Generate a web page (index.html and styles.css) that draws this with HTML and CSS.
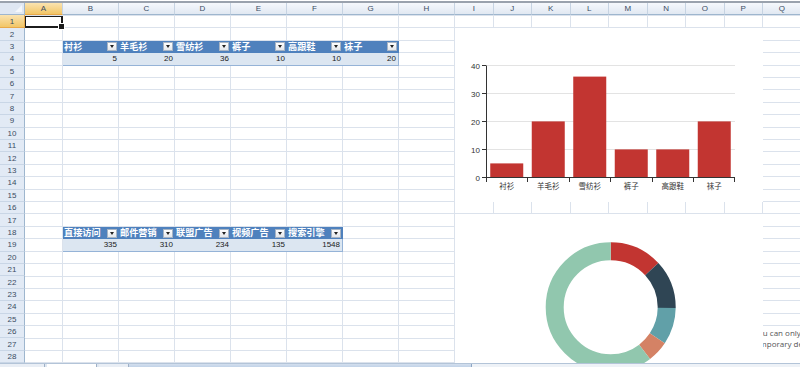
FILE: index.html
```html
<!DOCTYPE html>
<html lang="zh-CN">
  <head>
    <meta charset="UTF-8" />
    <title>Sheet1</title>
    <link rel="stylesheet" href="styles.css">
  </head>
  <body>
    <div class="book">
      <div class="topline"></div>

      <div class="sheet">
        <!-- column headers -->
        <div class="corner"><span class="tri"></span></div>
        <div class="ch sel">A</div>
        <div class="ch">B</div>
        <div class="ch">C</div>
        <div class="ch">D</div>
        <div class="ch">E</div>
        <div class="ch">F</div>
        <div class="ch">G</div>
        <div class="ch">H</div>
        <div class="ch">I</div>
        <div class="ch">J</div>
        <div class="ch">K</div>
        <div class="ch">L</div>
        <div class="ch">M</div>
        <div class="ch">N</div>
        <div class="ch">O</div>
        <div class="ch">P</div>
        <div class="ch">Q</div>

        <!-- row headers -->
        <div class="rh sel">1</div>
        <div class="rh">2</div>
        <div class="rh">3</div>
        <div class="rh">4</div>
        <div class="rh">5</div>
        <div class="rh">6</div>
        <div class="rh">7</div>
        <div class="rh">8</div>
        <div class="rh">9</div>
        <div class="rh">10</div>
        <div class="rh">11</div>
        <div class="rh">12</div>
        <div class="rh">13</div>
        <div class="rh">14</div>
        <div class="rh">15</div>
        <div class="rh">16</div>
        <div class="rh">17</div>
        <div class="rh">18</div>
        <div class="rh">19</div>
        <div class="rh">20</div>
        <div class="rh">21</div>
        <div class="rh">22</div>
        <div class="rh">23</div>
        <div class="rh">24</div>
        <div class="rh">25</div>
        <div class="rh">26</div>
        <div class="rh">27</div>
        <div class="rh">28</div>

        <!-- empty cell grid -->
        <div class="cells">
          <div></div><div></div><div></div><div></div><div></div><div></div>
          <div></div><div></div><div></div><div></div><div></div><div></div>
          <div></div><div></div><div></div><div></div><div></div>
        </div>

        <div class="active-cell"></div>

        <!-- table 1 -->
        <div class="tbl t1">
          <div class="th">衬衫<span class="dd"></span></div>
          <div class="th">羊毛衫<span class="dd"></span></div>
          <div class="th">雪纺衫<span class="dd"></span></div>
          <div class="th">裤子<span class="dd"></span></div>
          <div class="th">高跟鞋<span class="dd"></span></div>
          <div class="th">袜子<span class="dd"></span></div>
          <div class="td">5</div>
          <div class="td">20</div>
          <div class="td">36</div>
          <div class="td">10</div>
          <div class="td">10</div>
          <div class="td">20</div>
        </div>

        <!-- table 2 -->
        <div class="tbl t2">
          <div class="th">直接访问<span class="dd"></span></div>
          <div class="th">邮件营销<span class="dd"></span></div>
          <div class="th">联盟广告<span class="dd"></span></div>
          <div class="th">视频广告<span class="dd"></span></div>
          <div class="th">搜索引擎<span class="dd"></span></div>
          <div class="td">335</div>
          <div class="td">310</div>
          <div class="td">234</div>
          <div class="td">135</div>
          <div class="td">1548</div>
        </div>

        <!-- note partly hidden behind the charts -->
        <div class="note">
          <p class="l1">you can only view</p>
          <p class="l2">temporary demo</p>
        </div>

        <!-- bar chart -->
        <div class="chart chart1">
          <svg width="308" height="174" viewBox="0 0 308 174">
            <g class="grid-lines">
              <line x1="31" y1="37.5" x2="280" y2="37.5" />
              <line x1="31" y1="65.5" x2="280" y2="65.5" />
              <line x1="31" y1="93.5" x2="280" y2="93.5" />
              <line x1="31" y1="121.5" x2="280" y2="121.5" />
            </g>
            <g fill="#c23531">
              <rect x="35.25" y="135.4" width="33" height="14" />
              <rect x="76.75" y="93.4" width="33" height="56" />
              <rect x="118.25" y="48.6" width="33" height="100.8" />
              <rect x="159.75" y="121.4" width="33" height="28" />
              <rect x="201.25" y="121.4" width="33" height="28" />
              <rect x="242.75" y="93.4" width="33" height="56" />
            </g>
            <g class="axis">
              <line x1="31.5" y1="37.5" x2="31.5" y2="149.5" />
              <line x1="31" y1="149.5" x2="280" y2="149.5" />
              <line x1="27" y1="37.5" x2="31" y2="37.5" />
              <line x1="27" y1="65.5" x2="31" y2="65.5" />
              <line x1="27" y1="93.5" x2="31" y2="93.5" />
              <line x1="27" y1="121.5" x2="31" y2="121.5" />
              <line x1="27" y1="149.5" x2="31" y2="149.5" />
              <line x1="31.5" y1="149.5" x2="31.5" y2="154" />
              <line x1="72.5" y1="149.5" x2="72.5" y2="154" />
              <line x1="114.5" y1="149.5" x2="114.5" y2="154" />
              <line x1="155.5" y1="149.5" x2="155.5" y2="154" />
              <line x1="197.5" y1="149.5" x2="197.5" y2="154" />
              <line x1="238.5" y1="149.5" x2="238.5" y2="154" />
              <line x1="279.5" y1="149.5" x2="279.5" y2="154" />
            </g>
            <g class="ylab">
              <text x="25" y="40.5">40</text>
              <text x="25" y="68.5">30</text>
              <text x="25" y="96.5">20</text>
              <text x="25" y="124.5">10</text>
              <text x="25" y="152.5">0</text>
            </g>
            <g class="xlab">
              <text x="51.75" y="161">衬衫</text>
              <text x="93.25" y="161">羊毛衫</text>
              <text x="134.75" y="161">雪纺衫</text>
              <text x="176.25" y="161">裤子</text>
              <text x="217.75" y="161">高跟鞋</text>
              <text x="259.25" y="161">袜子</text>
            </g>
          </svg>
        </div>

        <!-- donut chart -->
        <div class="chart chart2">
          <svg width="308" height="160" viewBox="0 0 308 160">
            <g class="donut" transform="rotate(-90 155.7 93.25)">
              <circle cx="155.7" cy="93.25" r="56" stroke="#c23531" stroke-dasharray="46.01 305.85" stroke-dashoffset="0" />
              <circle cx="155.7" cy="93.25" r="56" stroke="#2f4554" stroke-dasharray="42.58 309.28" stroke-dashoffset="-46.01" />
              <circle cx="155.7" cy="93.25" r="56" stroke="#61a0a8" stroke-dasharray="32.14 319.72" stroke-dashoffset="-88.58" />
              <circle cx="155.7" cy="93.25" r="56" stroke="#d48265" stroke-dasharray="18.54 333.32" stroke-dashoffset="-120.72" />
              <circle cx="155.7" cy="93.25" r="56" stroke="#91c7ae" stroke-dasharray="212.6 139.26" stroke-dashoffset="-139.26" />
            </g>
          </svg>
        </div>
      </div>

      <div class="tabbar">
        <span class="tab"></span>
        <span class="tab active"></span>
        <span class="tab small"></span>
        <span class="hscroll"></span>
        <span class="rest"></span>
      </div>
    </div>
  </body>
</html>
```

FILE: styles.css
```css
/* Global */
* {
  margin: 0;
  padding: 0;
  box-sizing: border-box;
}

html,
body {
  width: 800px;
  height: 367px;
  overflow: hidden;
  background: #fff;
}

body {
  font-family: "Liberation Sans", Arial, sans-serif;
  color: #222;
}

.book {
  display: flex;
  flex-direction: column;
  height: 367px;
}

.topline {
  height: 3px;
  background: linear-gradient(#fff 1px, #9aa2ad 1px);
  flex-shrink: 0;
}

/* Sheet grid */
.sheet {
  --cols: 38px repeat(7, 56px) repeat(9, 38.5px);
  display: grid;
  grid-template-columns: 25px var(--cols);
  grid-template-rows: 12px 13.3px repeat(27, 12.41px);
  width: 801.5px;
  flex-shrink: 0;
}

.corner {
  display: flex;
  align-items: flex-end;
  justify-content: flex-end;
  padding: 0 2px 2px 0;
  background: #dfe7f2;
  border-right: 1px solid #9eb6ce;
  border-bottom: 1px solid #9eb6ce;
}

.tri {
  width: 0;
  height: 0;
  border-left: 7px solid transparent;
  border-bottom: 7px solid #f4f7fb;
}

.ch {
  display: flex;
  align-items: center;
  justify-content: center;
  font-size: 8px;
  color: #3a4c63;
  background: linear-gradient(#f5f8fc, #e1e8f2);
  border-right: 1px solid #c6d3e2;
  border-bottom: 1px solid #9eb6ce;
}

.rh {
  grid-column: 1;
  display: flex;
  align-items: center;
  justify-content: center;
  font-size: 8px;
  color: #3a4c63;
  background: #e2eaf5;
  border-right: 1px solid #9eb6ce;
  border-bottom: 1px solid #c9d6e6;
}

.ch.sel,
.rh.sel {
  background: linear-gradient(#fae3b0, #f2c667);
  border-bottom-color: #e8a94a;
}

.rh.sel {
  border-right-color: #e8a94a;
}

/* Empty cells: column lines as borders, row lines as a gradient */
.cells {
  grid-row: 2 / 30;
  grid-column: 2 / 19;
  display: grid;
  grid-template-columns: var(--cols);
}

.cells div {
  border-right: 1px solid #dbe2ec;
  background: repeating-linear-gradient(
    to bottom,
    transparent -11.52px,
    transparent -0.11px,
    #dbe2ec -0.11px,
    #dbe2ec 0.89px
  );
}

.active-cell {
  grid-row: 2;
  grid-column: 2;
  position: relative;
  border: 2px solid #1c1c1c;
  border-top-width: 1px;
  border-left-width: 1px;
  margin-top: 1px;
}

.active-cell::after {
  content: "";
  position: absolute;
  right: -4px;
  bottom: -4px;
  width: 5px;
  height: 5px;
  background: #1c1c1c;
  border: 1px solid #fff;
}

/* Tables */
.tbl {
  display: grid;
  grid-template-rows: 1fr 1fr;
  z-index: 1;
}

.t1 {
  grid-row: 4 / 6;
  grid-column: 3 / 9;
  grid-template-columns: repeat(6, 1fr);
}

.t2 {
  grid-row: 19 / 21;
  grid-column: 3 / 8;
  grid-template-columns: repeat(5, 1fr);
}

.th {
  display: flex;
  align-items: center;
  justify-content: space-between;
  padding-left: 1px;
  background: #4f81bd;
  color: #fff;
  font-family: "Noto Sans CJK SC", sans-serif;
  font-weight: 700;
  font-size: 9.2px;
  line-height: 1;
  white-space: nowrap;
  overflow: hidden;
}

.dd {
  display: flex;
  align-items: center;
  justify-content: center;
  flex-shrink: 0;
  width: 10px;
  height: 9px;
  margin-right: 2px;
  background: linear-gradient(#fefefe, #e4e7eb);
  border: 1px solid #a7b4c4;
}

.dd::before {
  content: "";
  border-left: 2.5px solid transparent;
  border-right: 2.5px solid transparent;
  border-top: 3px solid #222;
}

.td {
  padding-right: 2px;
  text-align: right;
  font-size: 8px;
  line-height: 11px;
  color: #1a1a1a;
  background: #dce6f1;
  border-bottom: 1px solid #95b3d7;
}

.td:first-of-type {
  border-left: 1px solid #95b3d7;
}

.td:last-child {
  border-right: 1px solid #95b3d7;
}

/* Note text behind the charts */
.note {
  grid-row: 27 / 30;
  grid-column: 18 / 19;
  padding-top: 1px;
  background: #fff;
  overflow: hidden;
  font-family: "Open Sans", sans-serif;
  font-size: 8px;
  line-height: 11px;
  color: #555;
  white-space: nowrap;
}

.note .l1 {
  margin-left: -9px;
}

.note .l2 {
  margin-left: -11px;
}

/* Charts */
.chart {
  background: #fff;
  overflow: hidden;
  z-index: 2;
}

.chart svg {
  display: block;
}

.chart1 {
  grid-row: 3 / 17;
  grid-column: 10 / 18;
}

.chart2 {
  grid-row: 18 / 30;
  grid-column: 10 / 18;
}

.grid-lines line {
  stroke: #e3e3e3;
  stroke-width: 1;
}

.axis line {
  stroke: #333;
  stroke-width: 1;
}

.ylab text {
  font-family: "Liberation Sans", sans-serif;
  font-size: 8px;
  fill: #333;
  text-anchor: end;
}

.xlab text {
  font-family: "Noto Sans CJK SC", sans-serif;
  font-size: 7.5px;
  fill: #333;
  text-anchor: middle;
}

.donut circle {
  fill: none;
  stroke-width: 18;
}

/* Sheet tabs + horizontal scrollbar */
.tabbar {
  flex: 1;
  display: flex;
  background: #dfe7f1;
  border-top: 1px solid #b3c4d8;
}

.tab {
  width: 45px;
  background: #e9eef5;
  border-right: 1px solid #9fb1c7;
}

.tab.active {
  width: 50px;
  margin-left: 2px;
  background: #fff;
}

.tab.small {
  width: 30px;
  margin-left: 2px;
}

.hscroll {
  width: 343px;
  background: linear-gradient(#d3dfee, #c2d3e8);
  border-right: 1px solid #8ea6c4;
}

.rest {
  flex: 1;
  background: #eef2f7;
}
```
